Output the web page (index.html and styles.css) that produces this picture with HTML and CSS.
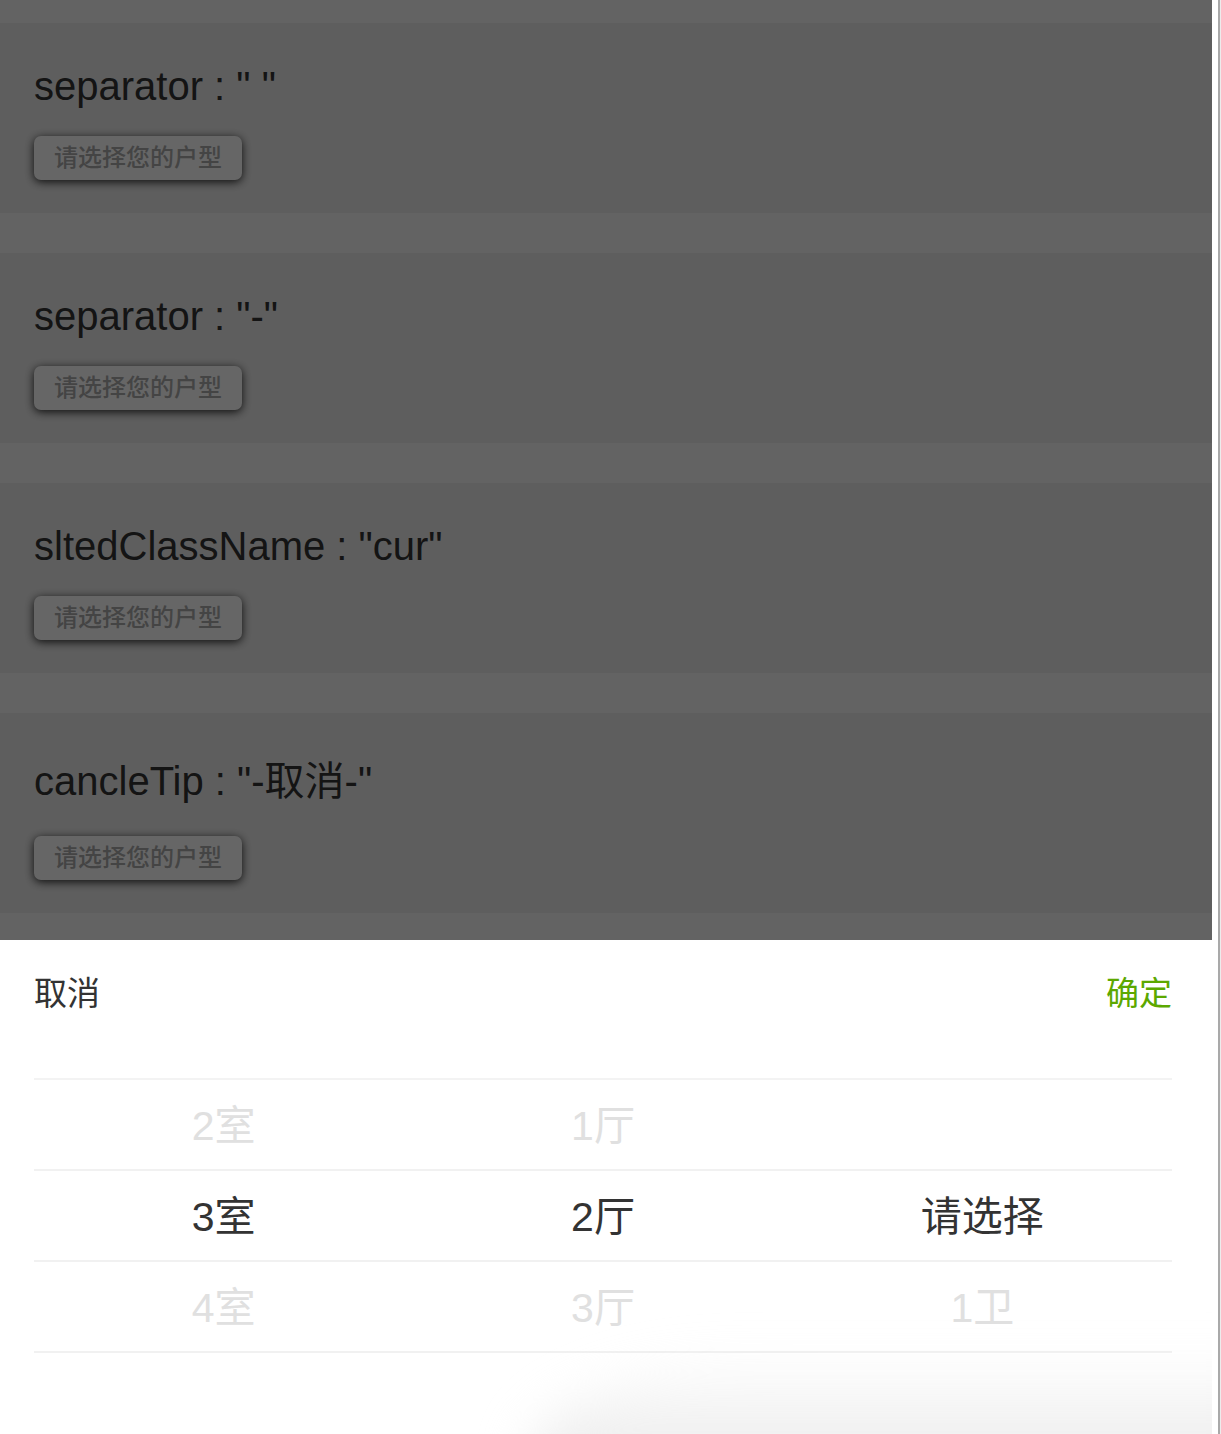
FILE: index.html
```html
<!DOCTYPE html>
<html lang="zh-CN">
<head>
<meta charset="utf-8">
<title>户型选择</title>
<link rel="stylesheet" href="styles.css">
</head>
<body>
<div class="screen">
  <main class="page">
    <section class="demo">
      <h2 class="demo-title">separator : " "</h2>
      <button class="demo-btn" type="button">请选择您的户型</button>
    </section>
    <section class="demo">
      <h2 class="demo-title">separator : "-"</h2>
      <button class="demo-btn" type="button">请选择您的户型</button>
    </section>
    <section class="demo">
      <h2 class="demo-title">sltedClassName : "cur"</h2>
      <button class="demo-btn" type="button">请选择您的户型</button>
    </section>
    <section class="demo">
      <h2 class="demo-title demo-title--tall">cancleTip : "-取消-"</h2>
      <button class="demo-btn" type="button">请选择您的户型</button>
    </section>
  </main>
  <div class="mask"></div>
  <div class="sheet">
    <div class="sheet-head">
      <span class="sheet-cancel">取消</span>
      <span class="sheet-confirm">确定</span>
    </div>
    <div class="picker">
      <div class="picker-row">
        <span class="picker-cell">2室</span>
        <span class="picker-cell">1厅</span>
        <span class="picker-cell"></span>
      </div>
      <div class="picker-row picker-row--current">
        <span class="picker-cell">3室</span>
        <span class="picker-cell">2厅</span>
        <span class="picker-cell">请选择</span>
      </div>
      <div class="picker-row">
        <span class="picker-cell">4室</span>
        <span class="picker-cell">3厅</span>
        <span class="picker-cell">1卫</span>
      </div>
    </div>
  </div>
</div>
<div class="scrollbar"></div>
</body>
</html>
```

FILE: styles.css
```css
html, body {
  margin: 0;
  padding: 0;
  height: 100%;
  overflow: hidden;
}

body {
  display: flex;
  width: 1221px;
  height: 1434px;
  background: #fff;
  font-family: "Liberation Sans", "Noto Sans CJK SC", sans-serif;
}

.screen {
  position: relative;
  width: 1212px;
  height: 1434px;
  flex: none;
  overflow: hidden;
  background: #f8f8f8;
}

.page {
  display: flex;
  flex-direction: column;
  gap: 40px;
  padding-top: 23px;
}

.demo {
  display: flex;
  flex-direction: column;
  align-items: flex-start;
  padding: 41px 34px 33px;
  background: #ececec;
}

.demo-title {
  margin: 0;
  font-size: 40px;
  font-weight: normal;
  line-height: 44px;
  color: #333;
}

.demo-title--tall {
  line-height: 54px;
}

.demo-btn {
  margin-top: 28px;
  height: 44px;
  padding: 0 20px;
  border: 0;
  border-radius: 7px;
  background: #fff;
  color: #aaa;
  font-family: "Liberation Sans", "Noto Sans CJK SC", sans-serif;
  font-size: 24px;
  font-weight: 500;
  line-height: 44px;
  box-shadow: 0 2px 10px rgba(0, 0, 0, 0.85);
}

.mask {
  position: absolute;
  inset: 0;
  background: rgba(0, 0, 0, 0.6);
}

.sheet {
  position: absolute;
  left: 0;
  right: 0;
  bottom: 0;
  height: 494px;
  padding: 0 40px 0 34px;
  background: #fff;
  overflow: hidden;
}

.sheet::after {
  content: "";
  position: absolute;
  left: 530px;
  right: -60px;
  bottom: -50px;
  height: 130px;
  border-top-left-radius: 260px 110px;
  background: linear-gradient(to bottom, rgba(238, 238, 238, 0), #ededed 75%);
  filter: blur(24px);
}

.sheet-head {
  display: flex;
  justify-content: space-between;
  height: 108px;
  font-size: 33px;
  line-height: 108px;
}

.sheet-cancel {
  color: #333;
}

.sheet-confirm {
  color: #5ca800;
}

.picker {
  margin-top: 30px;
  border-top: 2px solid #f3f3f3;
}

.picker-row {
  display: flex;
  height: 89px;
  border-bottom: 2px solid #f1f1f1;
}

.picker-cell {
  flex: 1;
  text-align: center;
  font-size: 41px;
  line-height: 92px;
  color: #e0e0e0;
}

.picker-row--current .picker-cell {
  color: #333;
}

.scrollbar {
  width: 9px;
  flex: none;
  height: 1434px;
  background: linear-gradient(to right, #fff 0 6px, #a9a9a9 6px 8px, #ececec 8px);
}
```
